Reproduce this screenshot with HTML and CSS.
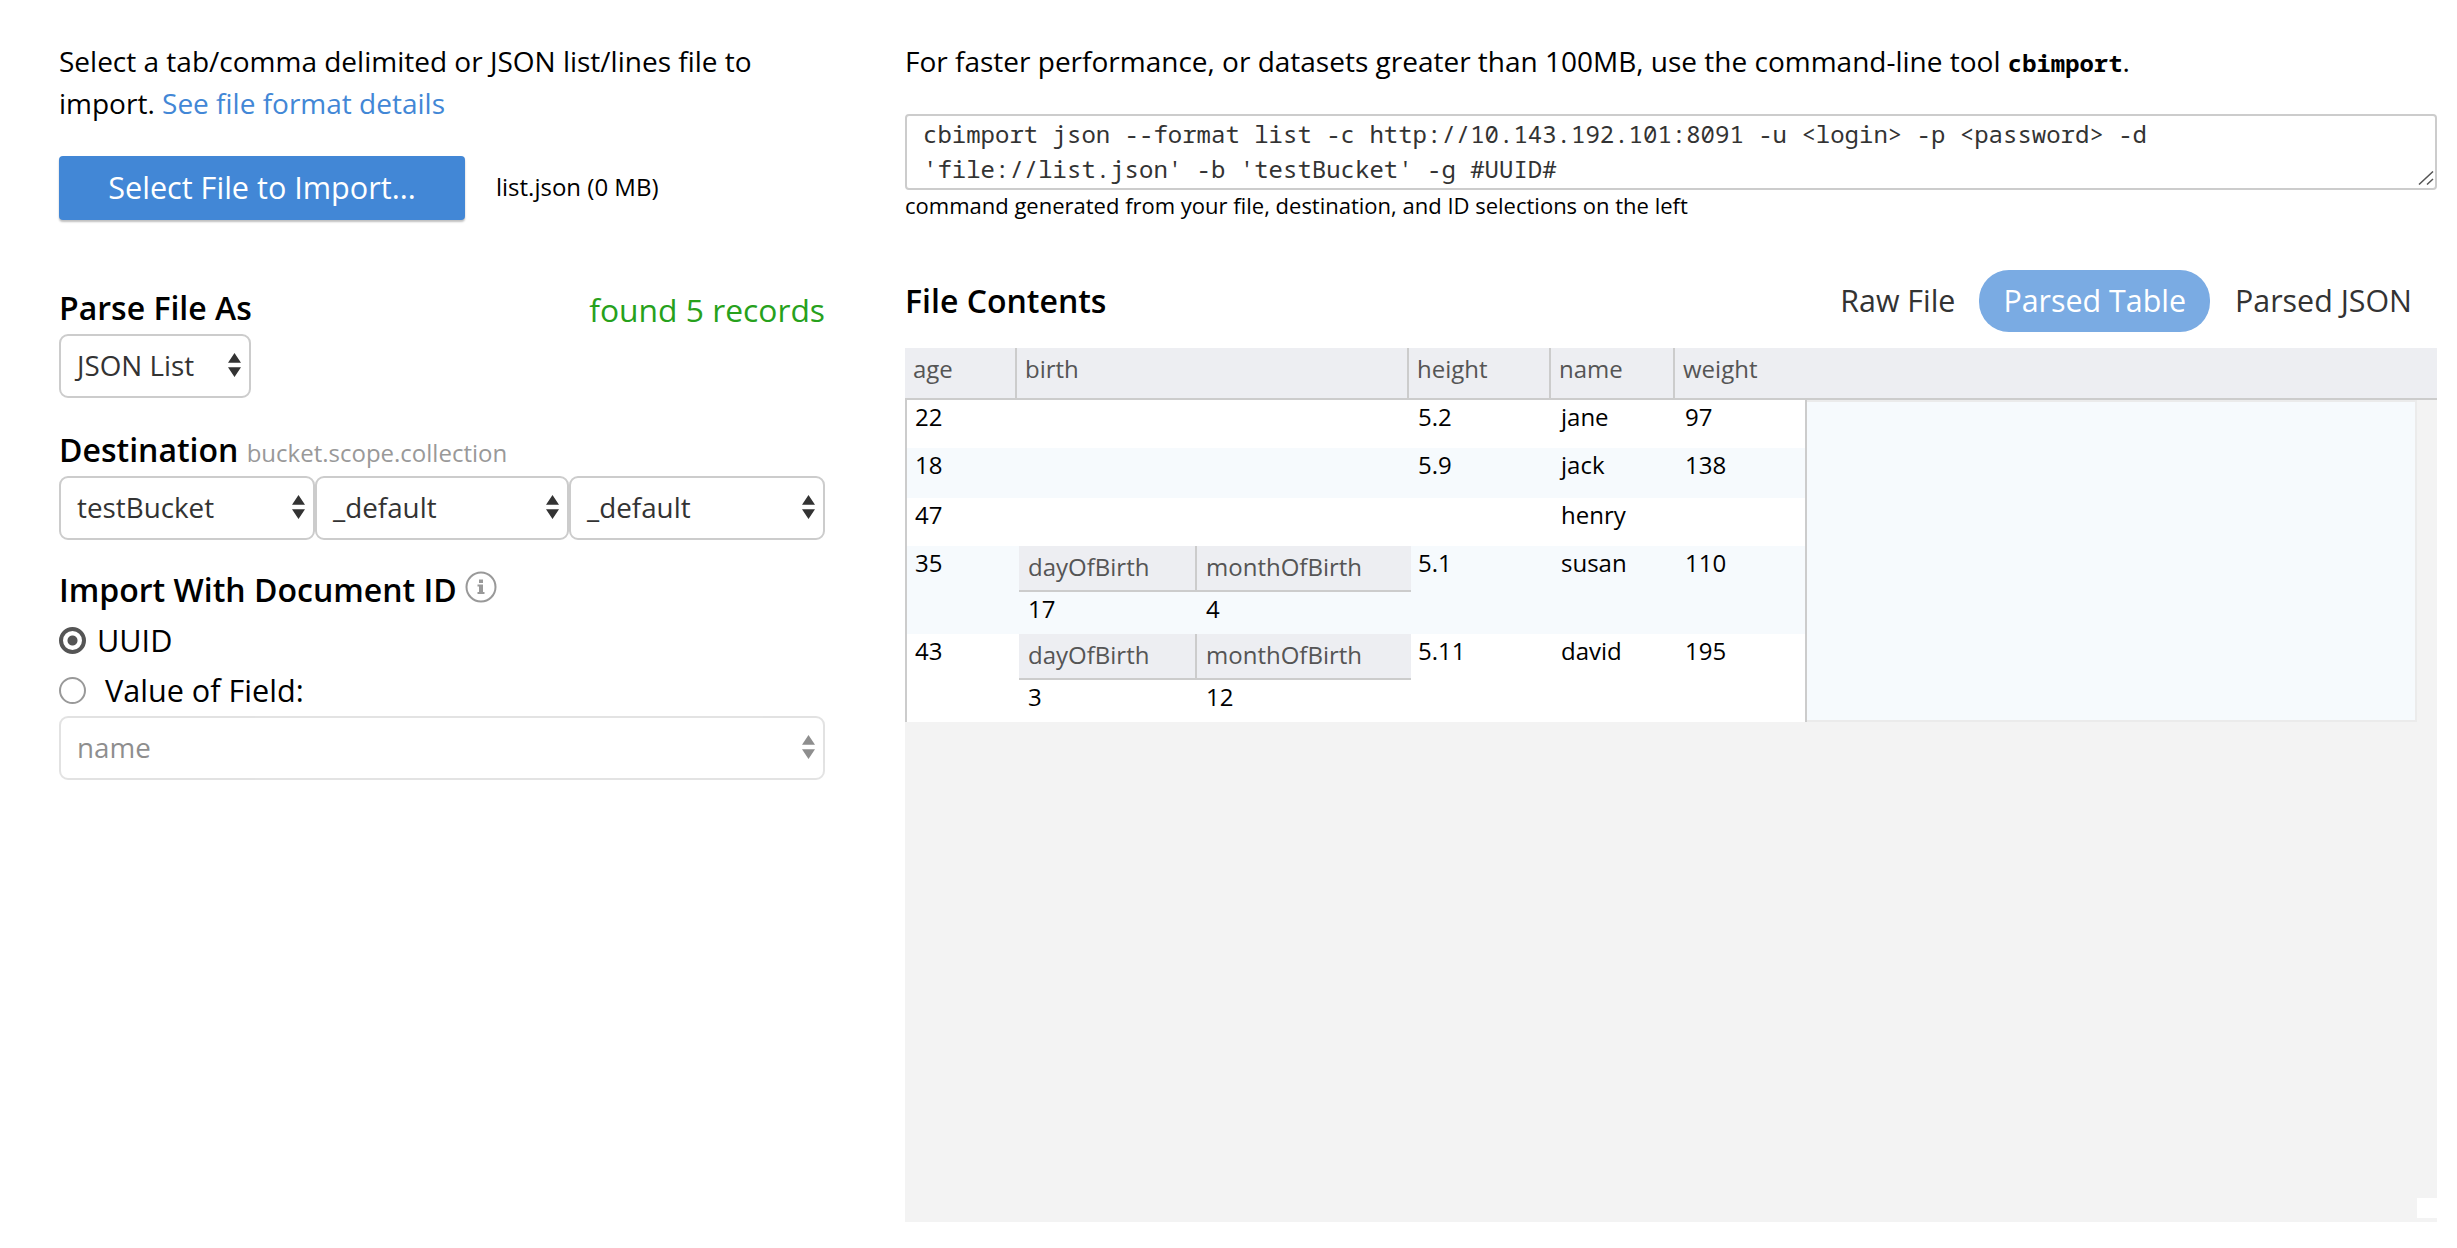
FILE: index.html
```html
<!DOCTYPE html>
<html lang="en">
<head>
<meta charset="utf-8">
<title>Import Documents</title>
<link rel="stylesheet" href="styles.css">
</head>
<body>
<main class="page">
  <section class="settings">
    <p class="intro">Select a tab/comma delimited or JSON list/lines file to<br>import. <a class="link">See file format details</a></p>
    <div class="file-row">
      <button class="button">Select File to Import...</button>
      <span class="file-name">list.json (0 MB)</span>
    </div>
    <div class="label-row parse-label"><h2 class="heading">Parse File As</h2><span class="found">found 5 records</span></div>
    <div class="select select-format">JSON List<svg class="arrows" viewBox="0 0 14 26"><path d="M7 0l7 10.500H0zM0 15.500h14L7 26z"/></svg></div>
    <div class="label-row dest-label"><h2 class="heading">Destination <small class="hint">bucket.scope.collection</small></h2></div>
    <div class="select-group">
      <div class="select">testBucket<svg class="arrows" viewBox="0 0 14 26"><path d="M7 0l7 10.500H0zM0 15.500h14L7 26z"/></svg></div>
      <div class="select">_default<svg class="arrows" viewBox="0 0 14 26"><path d="M7 0l7 10.500H0zM0 15.500h14L7 26z"/></svg></div>
      <div class="select">_default<svg class="arrows" viewBox="0 0 14 26"><path d="M7 0l7 10.500H0zM0 15.500h14L7 26z"/></svg></div>
    </div>
    <div class="label-row id-label"><h2 class="heading">Import With Document ID</h2>
      <svg class="info" viewBox="0 0 32 32"><circle cx="16" cy="16" r="14.500" fill="none" stroke="#999" stroke-width="2"/><path fill="#999" d="M14 8.500h4v3.500h-4zM12.500 13.500H18v7.500h1.500v2h-7v-2H14v-5.500h-1.500z"/></svg>
    </div>
    <div class="radio-row"><span class="radio radio-on"></span><span class="radio-text">UUID</span></div>
    <div class="radio-row radio-field"><span class="radio"></span><span class="radio-text">Value of Field:</span></div>
    <div class="select select-disabled">name<svg class="arrows" viewBox="0 0 14 26"><path d="M7 0l7 10.500H0zM0 15.500h14L7 26z"/></svg></div>
  </section>

  <section class="preview">
    <p class="intro">For faster performance, or datasets greater than 100MB, use the command-line tool <b class="tool">cbimport</b>.</p>
    <div class="command">cbimport json --format list -c http://10.143.192.101:8091 -u &lt;login&gt; -p &lt;password&gt; -d<br>'file://list.json' -b 'testBucket' -g #UUID#<svg class="grip" viewBox="0 0 16 14"><path d="M1 13.500L15 .5M9 13.500l6-5.500" stroke="#555" stroke-width="1.500" fill="none"/></svg></div>
    <p class="caption">command generated from your file, destination, and ID selections on the left</p>
    <div class="tabs-row">
      <h2 class="heading">File Contents</h2>
      <nav class="tabs"><a class="tab">Raw File</a><a class="tab tab-active">Parsed Table</a><a class="tab tab-last">Parsed JSON</a></nav>
    </div>
    <div class="grid-head"><span>age</span><span>birth</span><span>height</span><span>name</span><span>weight</span></div>
    <div class="grid-area">
      <div class="grid-content">
        <div class="grid-body">
          <div class="row"><span>22</span><span></span><span>5.2</span><span>jane</span><span>97</span></div>
          <div class="row row-alt row-tall"><span>18</span><span></span><span>5.9</span><span>jack</span><span>138</span></div>
          <div class="row"><span>47</span><span></span><span></span><span>henry</span><span></span></div>
          <div class="row row-alt row-nested"><span>35</span>
            <div class="nested"><span class="nested-head">dayOfBirth</span><span class="nested-head">monthOfBirth</span><span class="nested-value">17</span><span class="nested-value">4</span></div>
            <span>5.1</span><span>susan</span><span>110</span></div>
          <div class="row row-nested"><span>43</span>
            <div class="nested"><span class="nested-head">dayOfBirth</span><span class="nested-head">monthOfBirth</span><span class="nested-value">3</span><span class="nested-value">12</span></div>
            <span>5.11</span><span>david</span><span>195</span></div>
        </div>
        <div class="grid-rest"></div>
      </div>
      <div class="corner"></div>
    </div>
  </section>
</main>
</body>
</html>
```

FILE: styles.css
```css
* { box-sizing: border-box; }
body {
  margin: 0;
  background: #fff;
  color: #000;
  font-family: "Open Sans", sans-serif;
  font-size: 28px;
  line-height: 42px;
}
p, h2 { margin: 0; }
.page {
  display: grid;
  grid-template-columns: 766px 1532px;
  column-gap: 80px;
  padding: 40px 20px 0 59px;
  height: 1248px;
  align-items: start;
}
.link { color: #4287d6; }
.file-row { display: flex; align-items: center; gap: 31px; margin-top: 32px; }
.button {
  width: 406px;
  height: 64px;
  padding: 0 0 2px;
  border: 0;
  border-radius: 4px;
  background: #4287d6;
  color: #fff;
  font: 30.6px/60px "Open Sans", sans-serif;
  box-shadow: 0 2px 2px rgba(0, 0, 0, .25);
}
.file-name { padding-bottom: 2px; font-size: 24px; }
.label-row { display: flex; height: 44px; line-height: 44px; }
.parse-label { margin-top: 66px; justify-content: space-between; }
.dest-label { margin-top: 30px; }
.id-label { margin-top: 28px; gap: 8px; }
.heading { font-size: 32px; font-weight: 600; line-height: 44px; white-space: nowrap; }
.hint { font-size: 24px; font-weight: 400; color: #999; }
.found { font-size: 31.8px; color: #27a11c; padding-top: 2px; }
.select {
  display: flex;
  align-items: center;
  justify-content: space-between;
  height: 64px;
  padding: 0 8px 2px 16px;
  border: 2px solid #ccc;
  border-radius: 9px;
  color: #333;
  font-size: 27.8px;
}
.select-format { width: 192px; margin-top: 4px; }
.select-group { display: grid; grid-template-columns: 256px 254px 256px; margin-top: 4px; }
.arrows { width: 13px; height: 26px; fill: #333; }
.info { width: 32px; height: 32px; margin-top: 3px; }
.radio-row { display: flex; align-items: center; gap: 11px; height: 50px; font-size: 30.6px; }
.id-label + .radio-row { margin-top: 3px; }
.radio-field { gap: 19px; }
.radio { width: 27px; height: 27px; border: 2px solid #999; border-radius: 50%; }
.radio-on { border: 4px solid #555; background: radial-gradient(circle, #555 4.500px, #fff 5.500px); }
.select-disabled { margin-top: 1px; opacity: .55; }

.tool { font-family: "Noto Sans Mono", "DejaVu Sans Mono", monospace; font-size: 23.9px; line-height: 1; }
.command {
  position: relative;
  height: 76px;
  margin-top: 32px;
  padding: 0 16px;
  border: 2px solid #ccc;
  border-radius: 4px;
  color: #333;
  font: 24px/35px "Noto Sans Mono", "DejaVu Sans Mono", monospace;
}
.grip { position: absolute; right: 1px; bottom: 3px; width: 16px; height: 14px; }
.caption { height: 32px; font-size: 22px; line-height: 31px; }
.tabs-row { display: flex; justify-content: space-between; align-items: center; height: 62px; margin-top: 48px; }
.tabs { display: flex; }
.tab { padding: 0 24px; color: #333; font-size: 30.4px; line-height: 62px; }
.tab-active { border-radius: 30px; background: #7aabe3; color: #fff; }
.tab-last { padding: 0 25px; }
.grid-head {
  display: grid;
  grid-template-columns: 110px 392px 142px 124px 1fr;
  height: 52px;
  margin-top: 16px;
  border-bottom: 2px solid #ccc;
  background: #edeef2;
  color: #555;
  font-size: 24px;
  line-height: 42px;
}
.grid-head span { padding-left: 8px; }
.grid-head span + span { border-left: 2px solid #ccc; }
.grid-area { height: 822px; background: #f3f3f3; }
.grid-content { display: flex; width: 1512px; height: 322px; }
.grid-body { width: 902px; border: solid #ccc; border-width: 0 2px; background: #fff; }
.row {
  display: grid;
  grid-template-columns: 112px 391px 143px 124px 1fr;
  height: 48px;
  font-size: 24px;
  line-height: 34px;
}
.row > span { padding-left: 8px; }
.row-alt { background: #f6fafd; }
.row-tall { height: 50px; }
.row-nested { height: 88px; }
.nested { display: grid; grid-template: 46px 42px / 176px 216px; }
.nested span { padding-left: 9px; }
.nested-head { border-bottom: 2px solid #ccc; background: #edeef2; color: #555; line-height: 42px; }
.nested-head + .nested-head { border-left: 2px solid #ccc; }
.nested-value + .nested-value { padding-left: 11px; }
.grid-rest { flex: 1; border: 2px solid #ebebeb; border-left: 0; background: #f6fafd; }
.corner { width: 20px; height: 20px; margin: 476px 0 0 auto; background: #fff; }
```
